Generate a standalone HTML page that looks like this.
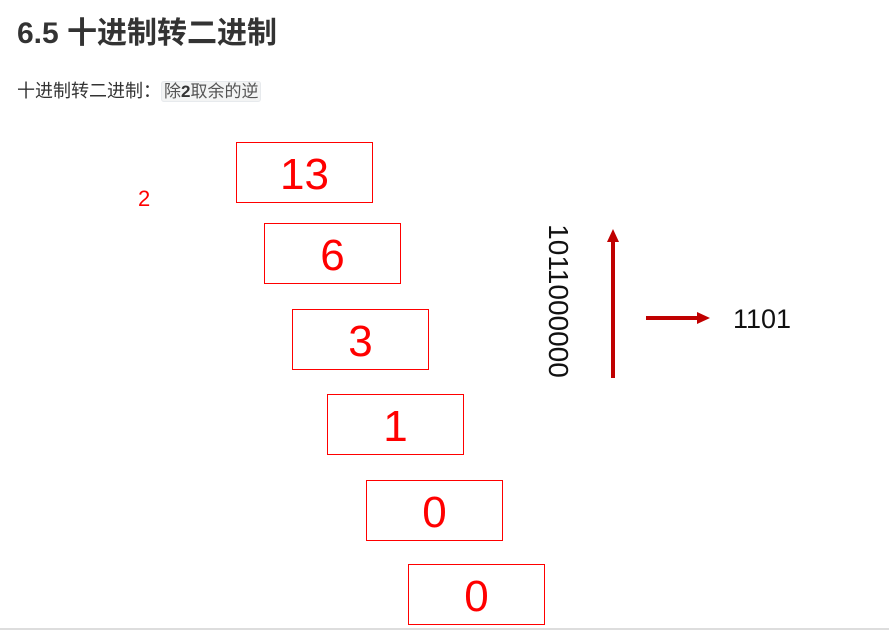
<!DOCTYPE html>
<html><head><meta charset="utf-8"><style>
body{margin:0;width:889px;height:631px;background:#fff;position:relative;overflow:hidden;font-family:"Liberation Sans","Noto Sans CJK SC",sans-serif}
h1{position:absolute;left:17px;top:14px;margin:0;font-size:30px;font-weight:bold;color:#333;line-height:40px}
.p{position:absolute;left:17px;top:78px;font-size:18px;color:#333;line-height:26px}
code{font-family:"Liberation Sans","Noto Sans CJK SC",sans-serif;background:#f3f4f4;border:1px solid #e7eaed;border-radius:3px;padding:0 2px;color:#555;font-size:17px}
.b{position:absolute;width:135px;height:59px;border:1.5px solid #f00;color:#f00;font-size:44px;text-align:center;line-height:64px}
.line{position:absolute;left:0;top:628px;width:889px;height:2px;background:#ddd}
</style></head><body>
<h1>6.5 十进制转二进制</h1>
<div class="p">十进制转二进制：<code>除<b style="color:#333">2</b>取余的逆</code></div>
<div style="position:absolute;left:138px;top:186px;color:#f00;font-size:22px">2</div>
<div class="b" style="left:236px;top:142px">13</div>
<div class="b" style="left:264px;top:223px">6</div>
<div class="b" style="left:292px;top:309px">3</div>
<div class="b" style="left:327px;top:394px">1</div>
<div class="b" style="left:366px;top:480px">0</div>
<div class="b" style="left:408px;top:564px">0</div>
<div style="position:absolute;left:473px;top:286px;width:170px;height:30px;transform:rotate(90deg);font-size:28px;color:#111;text-align:center;line-height:30px">1011000000</div>
<svg style="position:absolute;left:0;top:0" width="889" height="631">
<line x1="613" y1="378" x2="613" y2="240" stroke="#c00000" stroke-width="4"/>
<polygon points="607,242 619,242 613,229" fill="#c00000"/>
<line x1="646" y1="318" x2="700" y2="318" stroke="#c00000" stroke-width="4"/>
<polygon points="697,312 697,324 710,318" fill="#c00000"/>
</svg>
<div style="position:absolute;left:733px;top:304px;font-size:27px;color:#111">1101</div>
<div class="line"></div>
</body></html>
